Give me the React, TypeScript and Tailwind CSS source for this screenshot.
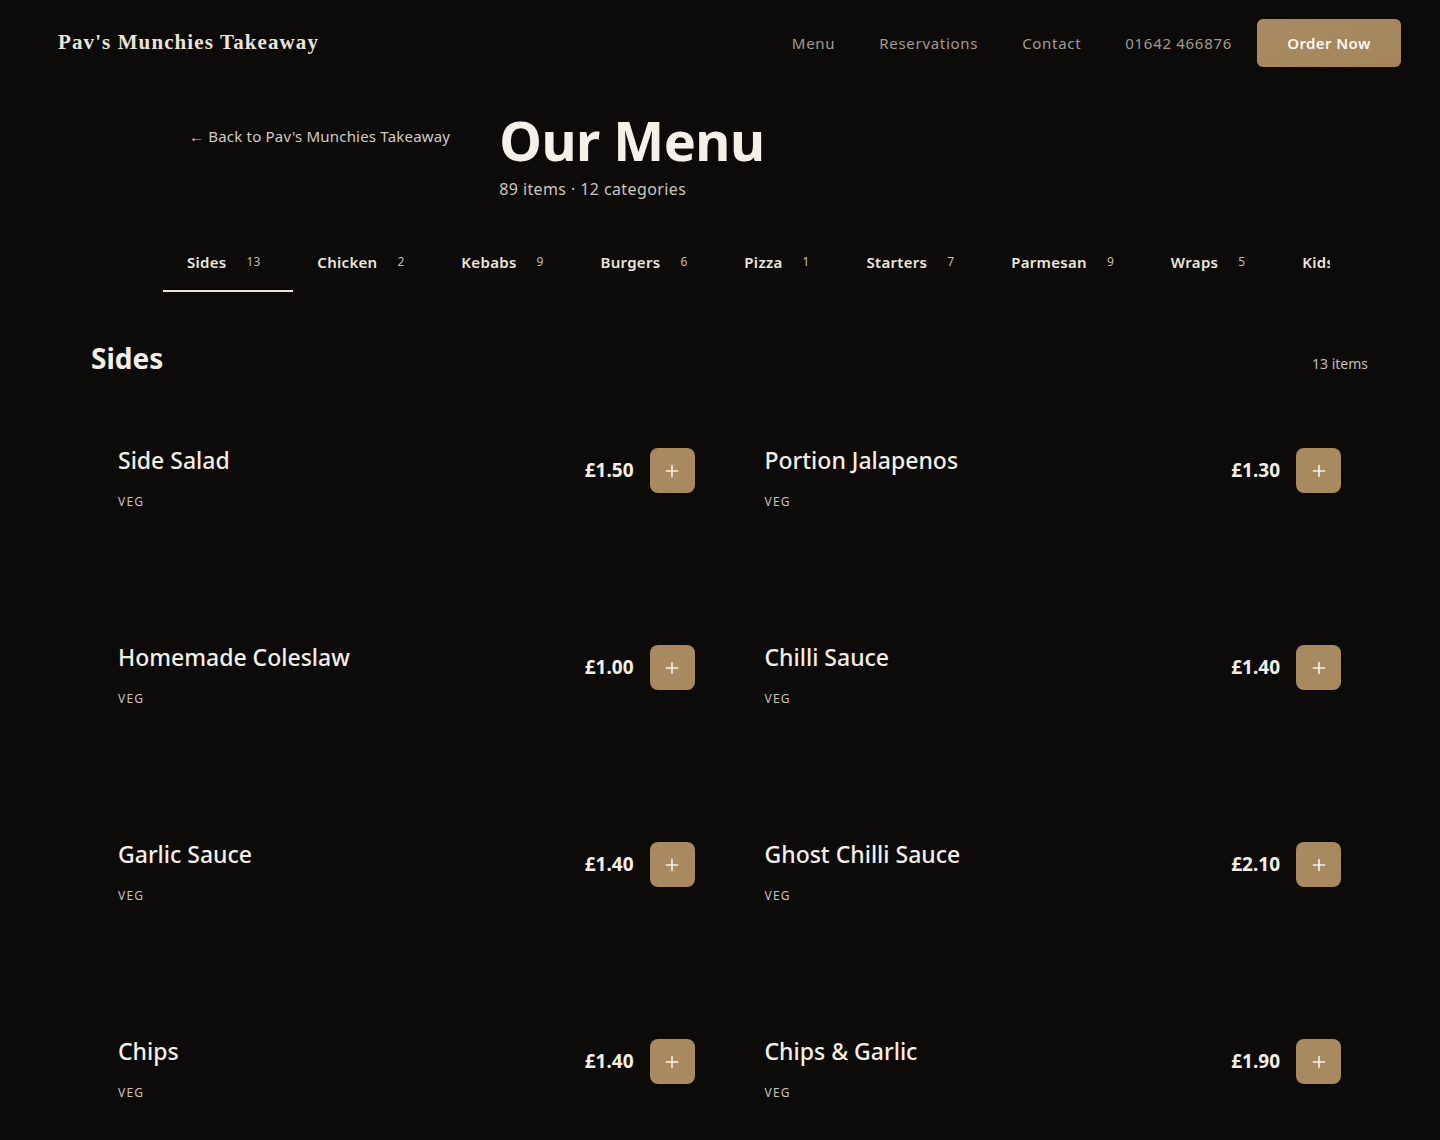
import React from "react";

const tabs: [string, string][] = [
  ["Sides", "13"],
  ["Chicken", "2"],
  ["Kebabs", "9"],
  ["Burgers", "6"],
  ["Pizza", "1"],
  ["Starters", "7"],
  ["Parmesan", "9"],
  ["Wraps", "5"],
  ["Kids", "4"],
  ["Desserts", "6"],
];

const items: [string, string][] = [
  ["Side Salad", "£1.50"],
  ["Portion Jalapenos", "£1.30"],
  ["Homemade Coleslaw", "£1.00"],
  ["Chilli Sauce", "£1.40"],
  ["Garlic Sauce", "£1.40"],
  ["Ghost Chilli Sauce", "£2.10"],
  ["Chips", "£1.40"],
  ["Chips & Garlic", "£1.90"],
  ["Chips & Cheese", "£2.20"],
  ["Chips & Curry", "£2.00"],
];

function Plus() {
  return (
    <svg width="14" height="14" viewBox="0 0 14 14" fill="none">
      <path d="M7 1.5v11M1.5 7h11" stroke="#f7f2ea" strokeWidth="1.6" strokeLinecap="round" />
    </svg>
  );
}

export default function App() {
  return (
    <div
      className="min-h-screen bg-[#0c0b0a] text-[#f3eee6]"
      style={{ fontFamily: '"Noto Sans", "Open Sans", sans-serif' }}
    >
      {/* Header */}
      <header className="h-[86px] flex items-center justify-between pl-[58px] pr-[39px]">
        <div
          className="text-[21px] font-bold tracking-[1.1px] text-[#e9e3d9]"
          style={{ fontFamily: '"Liberation Serif", "Times New Roman", serif' }}
        >
          Pav's Munchies Takeaway
        </div>
        <nav className="flex items-center">
          <div className="flex items-center gap-[44px] text-[15px] tracking-[0.7px] text-[#a29c92]">
            <a>Menu</a>
            <a>Reservations</a>
            <a>Contact</a>
            <a>01642 466876</a>
          </div>
          <button className="ml-[25px] w-[144px] h-[48px] rounded-md bg-gradient-to-br from-[#ab8b63] to-[#a3845b] text-[15px] font-semibold tracking-[0.4px] text-[#fbf7f0]">
            Order Now
          </button>
        </nav>
      </header>

      {/* Hero */}
      <section className="flex items-start pl-[189px] pt-[27px]">
        <a className="mt-[12px] text-[15px] tracking-[0.2px] text-[#d3ccc1]">← Back to Pav's Munchies Takeaway</a>
        <div className="ml-[49px]">
          <h1 className="text-[54px] leading-none font-bold tracking-[-0.5px] text-[#f5f0e8]">Our Menu</h1>
          <p className="mt-[10px] text-[16px] leading-6 tracking-[0.4px] text-[#cdc6bb]">89 items · 12 categories</p>
        </div>
      </section>

      {/* Tabs */}
      <div className="mt-[33px] ml-[163px] w-[1167px] overflow-hidden">
        <div className="flex whitespace-nowrap">
          {tabs.map(([label, count], i) => (
            <div
              key={label}
              className={`flex items-center shrink-0 pl-[24px] pr-[33px] pt-[18px] pb-[18px] border-b-2 ${
                i === 0 ? "border-[#e9e3d9]" : "border-transparent"
              }`}
            >
              <span className="text-[15px] leading-5 font-semibold tracking-[0.3px] text-[#ece6dc]">{label}</span>
              <span className="ml-[20px] text-[12px] leading-5 text-[#c4bdb2]">{count}</span>
            </div>
          ))}
        </div>
      </div>

      {/* Section */}
      <section className="pl-[91px] pr-[72px] mt-[48px]">
        <div className="flex items-baseline justify-between">
          <h2 className="text-[28px] leading-9 font-bold text-[#f3eee6]">Sides</h2>
          <span className="text-[14px] text-[#c4bdb2]">13 items</span>
        </div>
        <div className="mt-[44px] grid grid-cols-2 gap-4">
          {items.map(([name, price]) => (
            <div key={name} className="h-[181px] px-[27px] pt-[24px] flex items-start justify-between">
              <div>
                <div className="text-[23px] leading-8 font-medium text-[#f3eee6]">{name}</div>
                <div className="mt-[18px] text-[12px] leading-4 tracking-[1.2px] text-[#c9c2b7]">VEG</div>
              </div>
              <div className="flex items-center gap-4 mt-1">
                <span className="text-[19px] font-bold text-[#f3eee6]">{price}</span>
                <button className="w-[45px] h-[45px] rounded-lg bg-[#a98a60] flex items-center justify-center">
                  <Plus />
                </button>
              </div>
            </div>
          ))}
        </div>
      </section>
    </div>
  );
}
